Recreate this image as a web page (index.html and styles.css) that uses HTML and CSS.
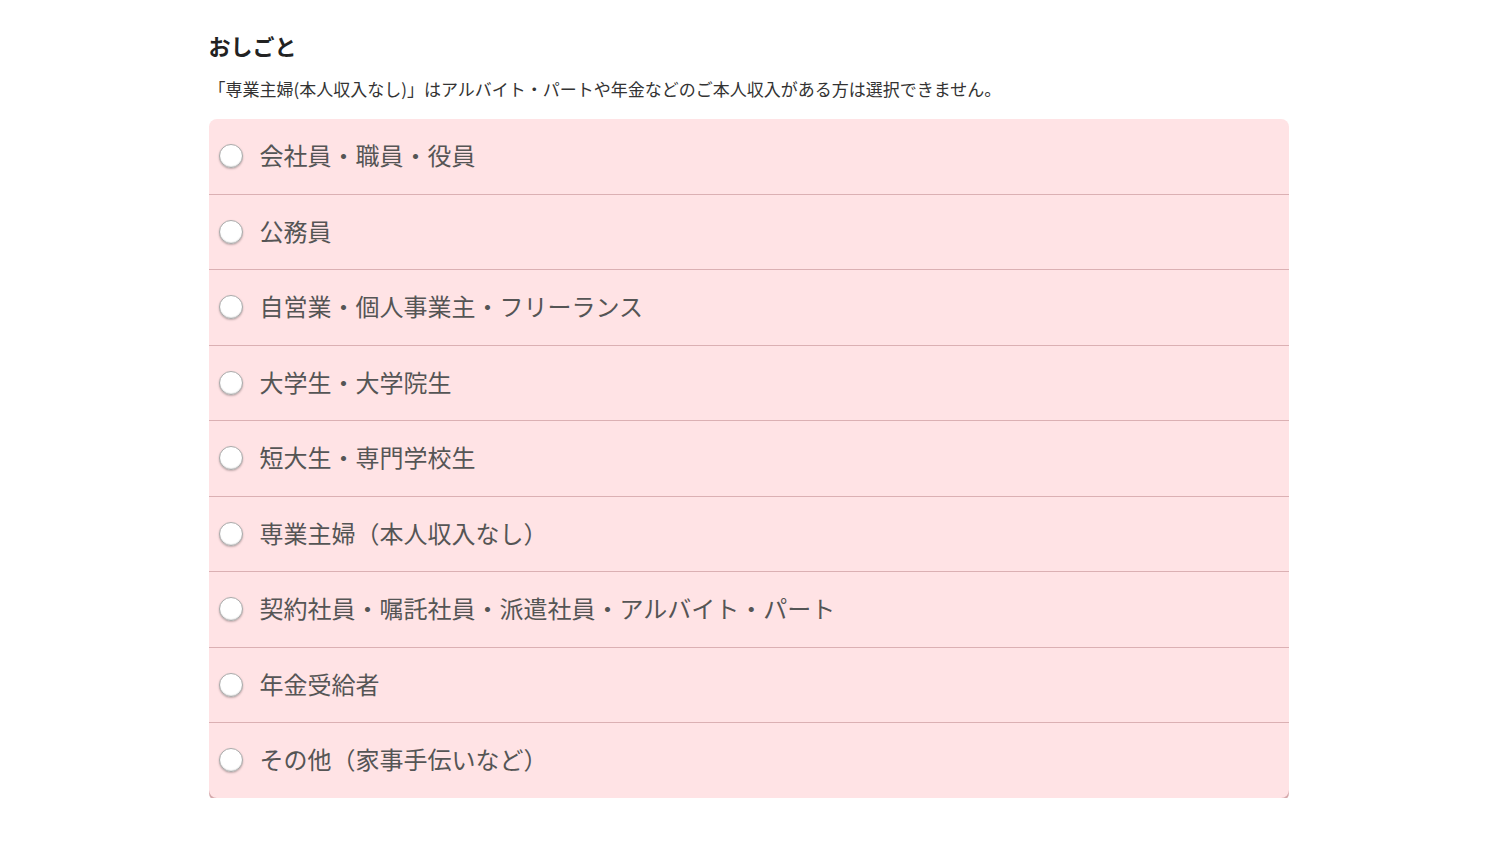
FILE: index.html
```html
<!DOCTYPE html>
<html lang="ja">
<head>
    <meta charset="UTF-8">
    <meta name="viewport" content="width=device-width, initial-scale=1.0">
    <title>おしごと</title>
    <link rel="stylesheet" href="styles.css">
</head>
<body>
    <section class="job-section">
        <h2 class="job-title">おしごと</h2>
        <p class="job-note">「専業主婦(本人収入なし)」はアルバイト・パートや年金などのご本人収入がある方は選択できません。</p>
        <ul class="job-list">
            <li><label class="job-item"><input type="radio" name="job"><span class="radio-mark"></span><span class="job-label">会社員・職員・役員</span></label></li>
            <li><label class="job-item"><input type="radio" name="job"><span class="radio-mark"></span><span class="job-label">公務員</span></label></li>
            <li><label class="job-item"><input type="radio" name="job"><span class="radio-mark"></span><span class="job-label">自営業・個人事業主・フリーランス</span></label></li>
            <li><label class="job-item"><input type="radio" name="job"><span class="radio-mark"></span><span class="job-label">大学生・大学院生</span></label></li>
            <li><label class="job-item"><input type="radio" name="job"><span class="radio-mark"></span><span class="job-label">短大生・専門学校生</span></label></li>
            <li><label class="job-item"><input type="radio" name="job"><span class="radio-mark"></span><span class="job-label">専業主婦（本人収入なし）</span></label></li>
            <li><label class="job-item"><input type="radio" name="job"><span class="radio-mark"></span><span class="job-label">契約社員・嘱託社員・派遣社員・アルバイト・パート</span></label></li>
            <li><label class="job-item"><input type="radio" name="job"><span class="radio-mark"></span><span class="job-label">年金受給者</span></label></li>
            <li><label class="job-item"><input type="radio" name="job"><span class="radio-mark"></span><span class="job-label">その他（家事手伝いなど）</span></label></li>
        </ul>
    </section>
</body>
</html>
```

FILE: styles.css
```css
body {
    margin: 0;
    padding: 0;
    background: #fff;
    color: #333;
    font-family: "Noto Sans CJK JP", "Noto Sans", sans-serif;
}

.job-section {
    width: 1080px;
    margin: 0 auto;
    padding-top: 29px;
}

.job-title {
    margin: 0;
    font-size: 22px;
    font-weight: bold;
    line-height: 32px;
    color: #222;
}

.job-note {
    margin: 16px 0 18px;
    font-size: 17px;
    line-height: 24px;
    color: #333;
}

.job-list {
    list-style: none;
    margin: 0;
    padding: 0;
    background: #ffe3e5;
    border-radius: 8px;
    box-shadow: 0 3px 0 #d5a9ac;
    overflow: hidden;
}

.job-list li {
    border-bottom: 1px solid #dbb0b3;
}

.job-list li:last-child {
    border-bottom: none;
}

.job-item {
    display: flex;
    align-items: center;
    height: 74.5px;
    padding-left: 10px;
    cursor: pointer;
}

.job-item input {
    display: none;
}

/* Custom radio circle */
.radio-mark {
    width: 22px;
    height: 22px;
    border-radius: 50%;
    background: #fff;
    border: 1px solid #ababab;
    box-shadow: inset 0 -1px 1px rgba(0, 0, 0, 0.12), 0 1px 2px rgba(0, 0, 0, 0.25);
    flex-shrink: 0;
}

.job-label {
    margin-left: 17px;
    padding-bottom: 3px;
    font-size: 24px;
    color: #555;
}
```
